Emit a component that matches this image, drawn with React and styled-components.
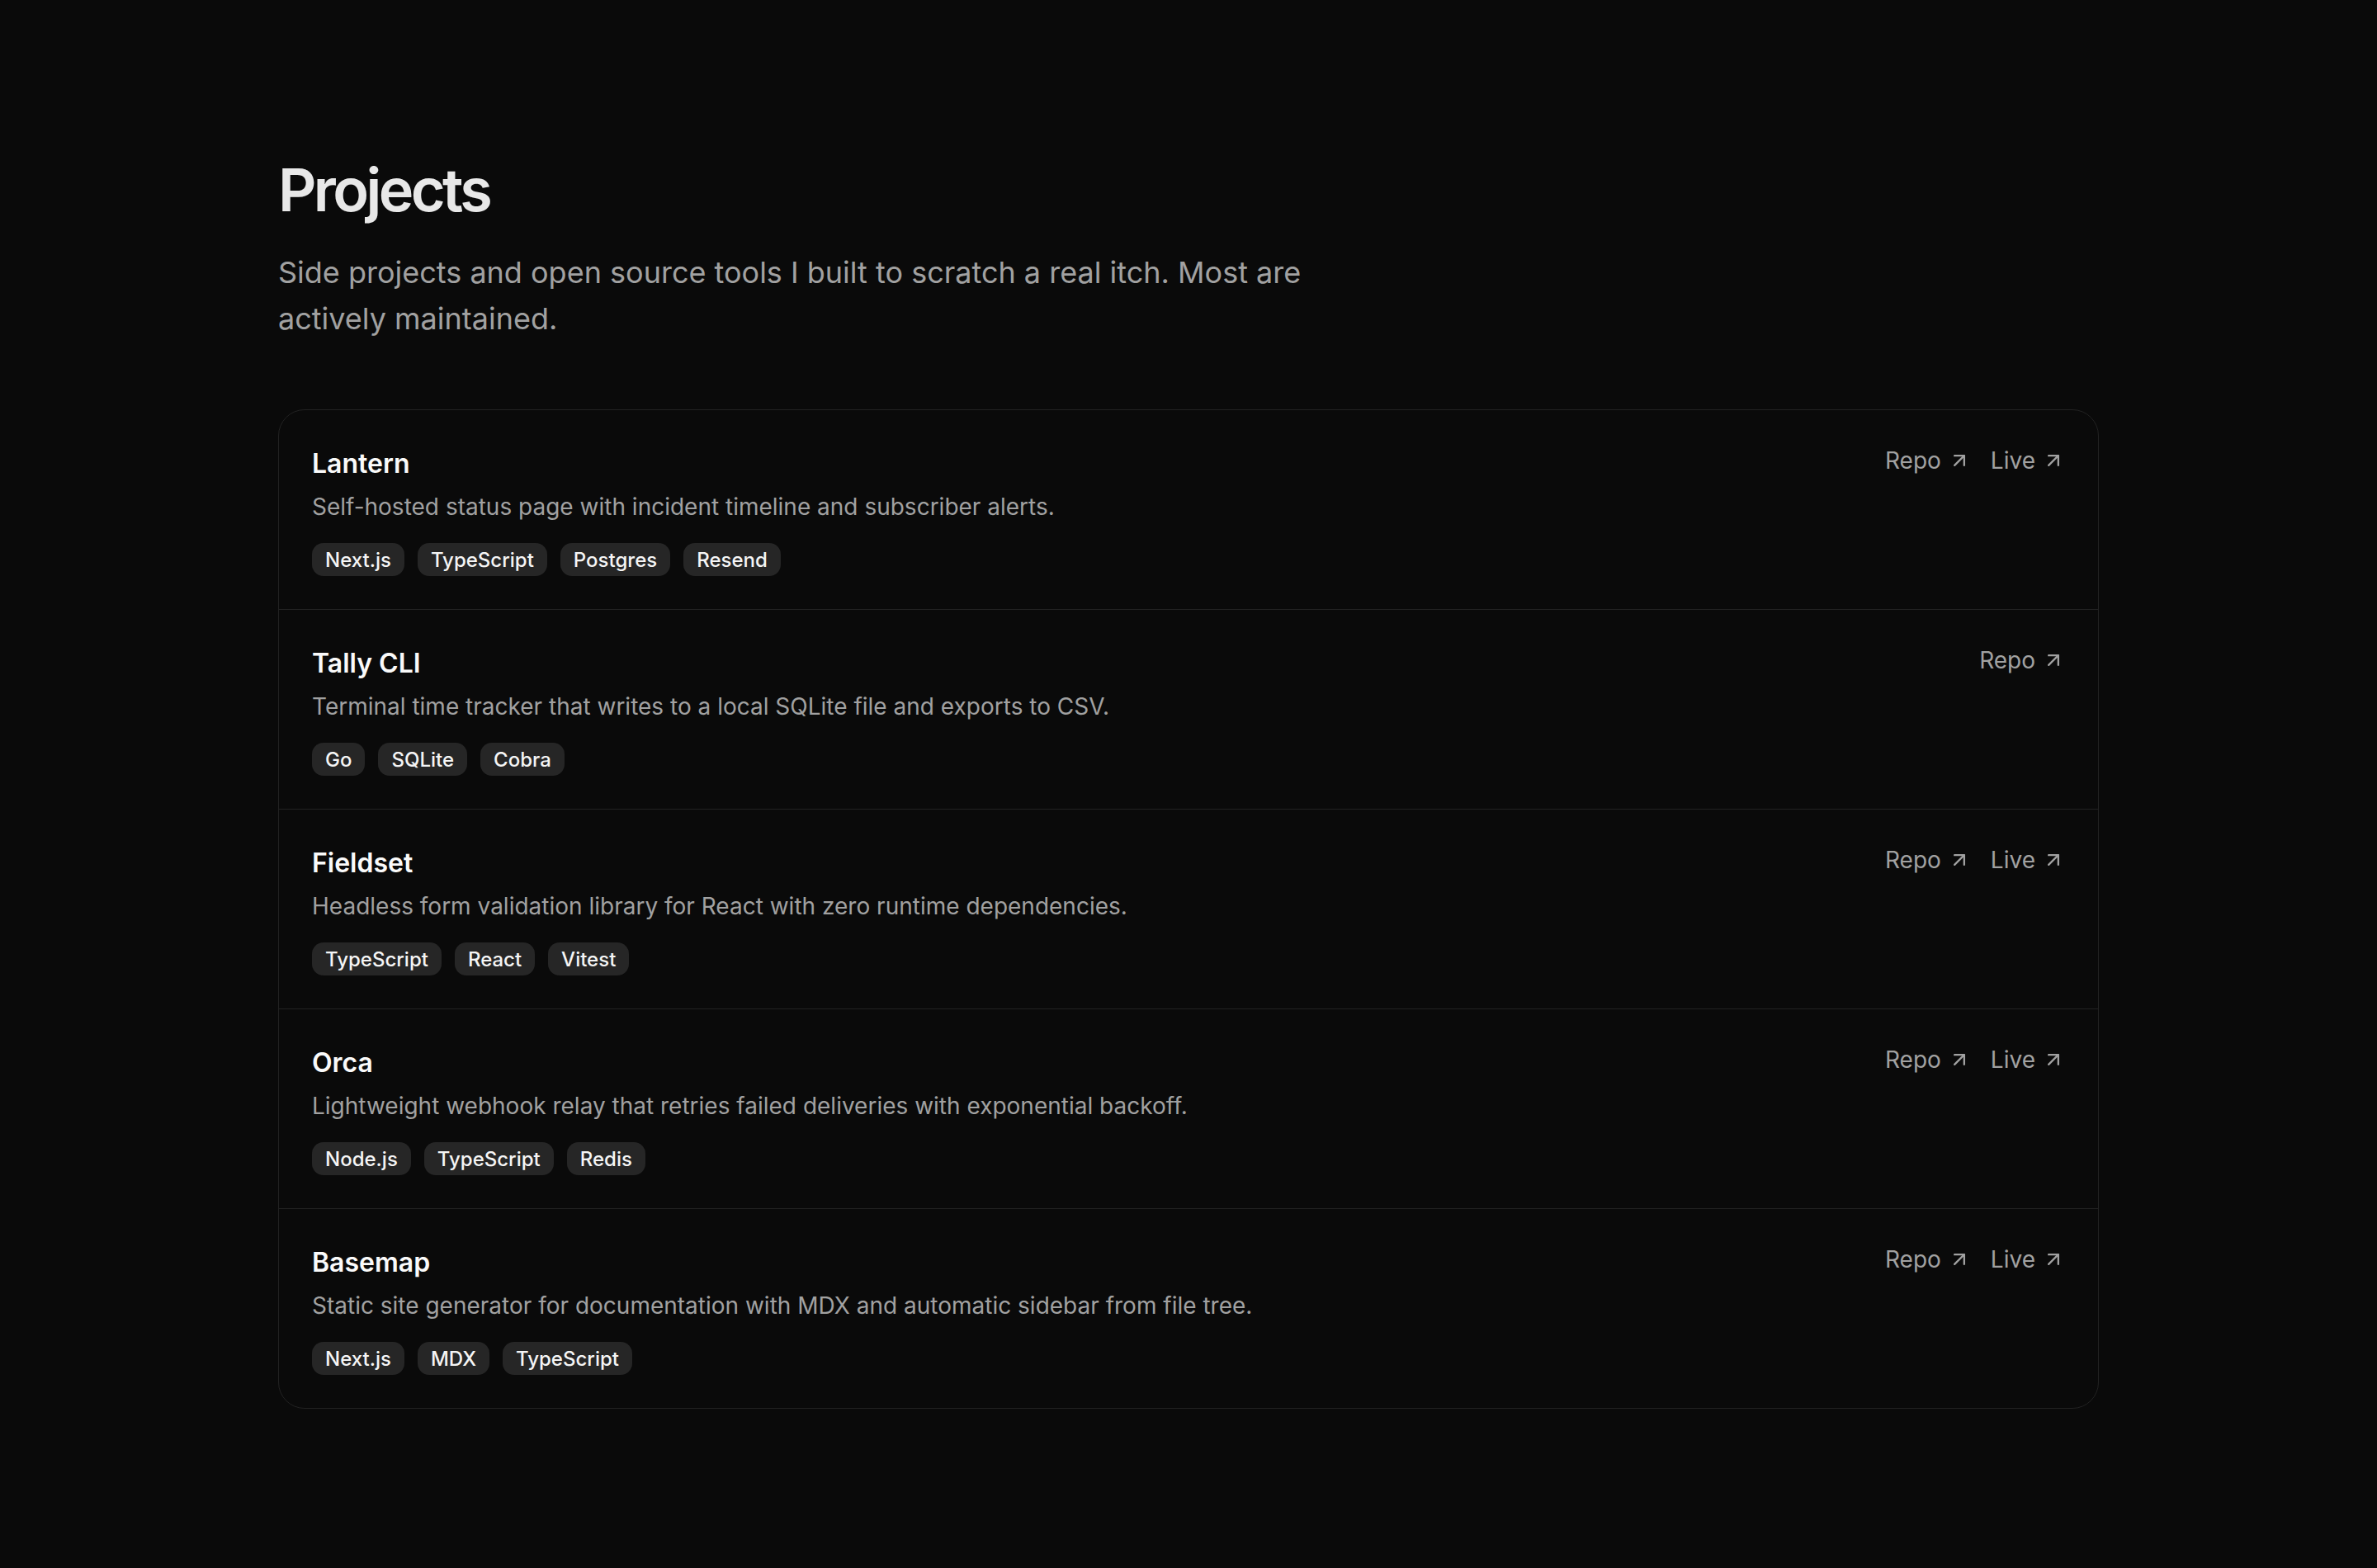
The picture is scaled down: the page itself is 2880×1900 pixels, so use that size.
import React from 'react';
import styled, { createGlobalStyle } from 'styled-components';

const GlobalStyle = createGlobalStyle`
  html, body {
    margin: 0;
    padding: 0;
    background: #0a0a0a;
  }
  body {
    font-family: Inter, "Noto Sans", sans-serif;
    color: #ededed;
    -webkit-font-smoothing: antialiased;
  }
  * { box-sizing: border-box; }
`;

const Page = styled.main`
  min-height: 1900px;
  padding: 190px 0 120px;
`;

const Container = styled.div`
  width: 2206px;
  margin: 0 auto;
`;

const Heading = styled.h1`
  margin: 0;
  font-size: 72px;
  line-height: 80px;
  font-weight: 600;
  letter-spacing: -0.05em;
  color: #e8e8e8;
`;

const Lead = styled.p`
  margin: 32px 0 0;
  max-width: 1280px;
  font-size: 36px;
  line-height: 56px;
  color: #a1a1a1;
`;

const Card = styled.ul`
  list-style: none;
  margin: 82px 0 0;
  padding: 0;
  border: 1px solid #222222;
  border-radius: 32px;
  overflow: hidden;
`;

const Row = styled.li`
  display: flex;
  justify-content: space-between;
  align-items: flex-start;
  gap: 32px;
  padding: 41px 40px 40px;
  & + & {
    border-top: 1px solid #222222;
  }
`;

const Info = styled.div`
  display: flex;
  flex-direction: column;
`;

const Title = styled.h2`
  margin: 0;
  font-size: 32px;
  line-height: 48px;
  font-weight: 600;
  color: #fafafa;
`;

const Description = styled.p`
  margin: 8px 0 0;
  font-size: 28px;
  line-height: 40px;
  color: #a1a1a1;
`;

const Tags = styled.div`
  display: flex;
  gap: 16px;
  margin-top: 24px;
`;

const Tag = styled.span`
  display: inline-flex;
  align-items: center;
  height: 40px;
  padding: 0 16px;
  border-radius: 14px;
  background: #262626;
  font-size: 24px;
  font-weight: 500;
  color: #f5f5f5;
`;

const Links = styled.div`
  display: flex;
  gap: 24px;
  flex-shrink: 0;
`;

const LinkItem = styled.a`
  display: inline-flex;
  align-items: center;
  gap: 8px;
  font-size: 28px;
  line-height: 40px;
  color: #a1a1a1;
  text-decoration: none;
`;

const ArrowUpRight = () => (
  <svg width="28" height="28" viewBox="0 0 24 24" fill="none" stroke="currentColor"
    strokeWidth="2" strokeLinecap="round" strokeLinejoin="round">
    <path d="M7 7h10v10" />
    <path d="M7 17 17 7" />
  </svg>
);

const projects = [
  {
    name: 'Lantern',
    text: 'Self-hosted status page with incident timeline and subscriber alerts.',
    tags: ['Next.js', 'TypeScript', 'Postgres', 'Resend'],
    live: true,
  },
  {
    name: 'Tally CLI',
    text: 'Terminal time tracker that writes to a local SQLite file and exports to CSV.',
    tags: ['Go', 'SQLite', 'Cobra'],
    live: false,
  },
  {
    name: 'Fieldset',
    text: 'Headless form validation library for React with zero runtime dependencies.',
    tags: ['TypeScript', 'React', 'Vitest'],
    live: true,
  },
  {
    name: 'Orca',
    text: 'Lightweight webhook relay that retries failed deliveries with exponential backoff.',
    tags: ['Node.js', 'TypeScript', 'Redis'],
    live: true,
  },
  {
    name: 'Basemap',
    text: 'Static site generator for documentation with MDX and automatic sidebar from file tree.',
    tags: ['Next.js', 'MDX', 'TypeScript'],
    live: true,
  },
];

export default function App() {
  return (
    <Page>
      <GlobalStyle />
      <Container>
        <Heading>Projects</Heading>
        <Lead>
          Side projects and open source tools I built to scratch a real itch. Most are actively maintained.
        </Lead>
        <Card>
          {projects.map(p => (
            <Row key={p.name}>
              <Info>
                <Title>{p.name}</Title>
                <Description>{p.text}</Description>
                <Tags>
                  {p.tags.map(t => <Tag key={t}>{t}</Tag>)}
                </Tags>
              </Info>
              <Links>
                <LinkItem href="#">Repo <ArrowUpRight /></LinkItem>
                {p.live && <LinkItem href="#">Live <ArrowUpRight /></LinkItem>}
              </Links>
            </Row>
          ))}
        </Card>
      </Container>
    </Page>
  );
}
